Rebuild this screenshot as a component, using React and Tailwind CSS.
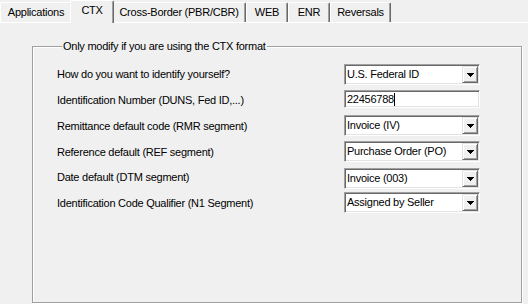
import React from 'react';

const tabs = [
  { label: 'Applications', cls: 'w-[72px] h-[20px] pt-[3px]' },
  { label: 'CTX', cls: 'w-[44px] h-[23px] -mx-[2px] -mb-[1px] pt-[3px] relative z-10', active: true },
  { label: 'Cross-Border (PBR/CBR)', cls: 'w-[134px] h-[20px] pt-[3px]' },
  { label: 'WEB', cls: 'w-[42px] h-[20px] pt-[3px]' },
  { label: 'ENR', cls: 'w-[42px] h-[20px] pt-[3px]' },
  { label: 'Reversals', cls: 'w-[61px] h-[20px] pt-[3px]' },
];

const rows = [
  { label: 'How do you want to identify yourself?', value: 'U.S. Federal ID', row: 'mt-0', lab: 'pt-[4px]' },
  { label: 'Identification Number (DUNS, Fed ID,...)', value: '22456788', text: true, row: 'mt-[5px]', lab: 'pt-[4px]' },
  { label: 'Remittance default code (RMR segment)', value: 'Invoice (IV)', row: 'mt-[7px]', lab: 'pt-[5px]' },
  { label: 'Reference default (REF segment)', value: 'Purchase Order (PO)', row: 'mt-[5px]', lab: 'pt-[5px]' },
  { label: 'Date default (DTM segment)', value: 'Invoice (003)', row: 'mt-[6px]', lab: 'pt-[3px]' },
  { label: 'Identification Code Qualifier (N1 Segment)', value: 'Assigned by Seller', row: 'mt-[3px]', lab: 'pt-[5px]' },
];

const sunken =
  'bg-white border border-t-[#a0a0a0] border-l-[#a0a0a0] border-b-white border-r-white shadow-[inset_1px_1px_0_#696969,inset_-1px_-1px_0_#e3e3e3] p-[1px]';

const Arrow = () => (
  <svg width="7" height="4" viewBox="0 0 7 4" shapeRendering="crispEdges">
    <rect x="0" y="0" width="7" height="1" fill="#000" />
    <rect x="1" y="1" width="5" height="1" fill="#000" />
    <rect x="2" y="2" width="3" height="1" fill="#000" />
    <rect x="3" y="3" width="1" height="1" fill="#000" />
  </svg>
);

const Combo = ({ value }) => (
  <div className={`w-[136px] h-[21px] flex ${sunken}`}>
    <span className="flex-1 pl-[1px] leading-[17px] whitespace-nowrap overflow-hidden">{value}</span>
    <span className="w-[16px] h-[17px] flex items-center justify-center bg-[#f0f0f0] border border-t-[#e3e3e3] border-l-[#e3e3e3] border-b-[#696969] border-r-[#696969] shadow-[inset_1px_1px_0_#fff,inset_-1px_-1px_0_#a0a0a0]">
      <Arrow />
    </span>
  </div>
);

const TextBox = ({ value }) => (
  <div className={`w-[136px] h-[18px] flex items-center ${sunken}`}>
    <span className="pl-[1px] leading-[14px]">{value}</span>
    <span className="w-[1px] h-[13px] bg-black" />
  </div>
);

export default function App() {
  return (
    <div className="w-[528px] h-[304px] bg-[#f0f0f0] flex flex-col overflow-hidden text-black text-[11px] tracking-[-0.25px] font-['Liberation_Sans',Arial,sans-serif]">
      {/* tab strip */}
      <div className="h-[22px] flex items-end">
        {tabs.map((t) => (
          <div
            key={t.label}
            className={`${t.cls} flex justify-center items-start leading-[13px] bg-[#f0f0f0] border-t border-l border-r border-t-white border-l-white border-r-[#696969] shadow-[inset_-1px_0_0_#a0a0a0] rounded-t-[2px] whitespace-nowrap`}
          >
            {t.label}
          </div>
        ))}
      </div>

      {/* tab page */}
      <div className="flex-1 flex flex-col border-t border-white">
        <fieldset className="mt-[17px] ml-[32px] mb-[1px] w-[490px] flex-1 border border-[#a0a0a0] shadow-[inset_1px_1px_0_#fff,1px_1px_0_#fff] pl-[24px] pt-[11px]">
          <legend className="ml-[5px] px-[1px] leading-[13px] bg-[#f0f0f0]">
            Only modify if you are using the CTX format
          </legend>
          {rows.map((r) => (
            <div key={r.label} className={`flex items-start ${r.row}`}>
              <div className={`w-[287px] leading-[13px] whitespace-nowrap ${r.lab}`}>{r.label}</div>
              {r.text ? <TextBox value={r.value} /> : <Combo value={r.value} />}
            </div>
          ))}
        </fieldset>
      </div>
    </div>
  );
}
